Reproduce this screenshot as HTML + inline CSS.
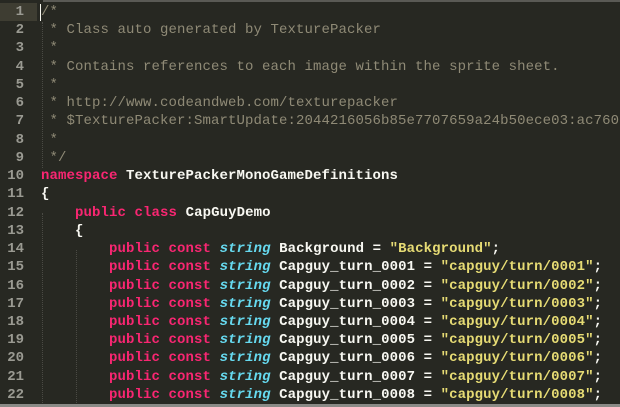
<!DOCTYPE html>
<html><head><style>
html,body{margin:0;padding:0;background:#272822;width:620px;height:407px;overflow:hidden}
body{position:relative;font-family:"Liberation Mono",monospace;font-size:14px}
.top{position:absolute;left:43px;top:0;width:577px;height:2px;background:#5a5a55}
.bot{position:absolute;left:0;top:404px;width:620px;height:3px;background:#8a8a86}
.g{position:absolute;left:0;top:3px;width:24px;text-align:right;color:#9a9a92;line-height:18.24px;white-space:pre;font-weight:bold}
.hl{position:absolute;left:0;top:3px;width:37px;height:18px;background:#3e3d32}
.c{position:absolute;left:41px;top:3px;line-height:18.24px;white-space:pre;color:#f8f8f2;font-weight:bold;letter-spacing:0.1px}
.cm{color:#8f8a76;font-weight:normal}.k{color:#f92672}.t{color:#66d9ef;font-style:italic}.s{color:#e6db74}
.cur{position:absolute;left:40px;top:4px;width:1px;height:17px;background:#f8f8f0}
.guide{position:absolute;width:0;border-left:1px dotted #4a4a44}
</style></head><body>
<div class="top"></div>
<div class="hl"></div>
<div class="g">1
2
3
4
5
6
7
8
9
10
11
12
13
14
15
16
17
18
19
20
21
22</div>
<div class="guide" style="left:42px;top:22px;height:146px"></div>
<div class="guide" style="left:42px;top:213px;height:190px"></div>
<div class="guide" style="left:76px;top:250px;height:153px"></div>
<div class="cur"></div>
<div class="c"><span class="cm">/*
 * Class auto generated by TexturePacker
 *
 * Contains references to each image within the sprite sheet.
 *
 * http://www.codeandweb.com/texturepacker
 * $TexturePacker:SmartUpdate:2044216056b85e7707659a24b50ece03:ac760
 *
 */</span>
<span class="k">namespace</span> TexturePackerMonoGameDefinitions
{
    <span class="k">public</span> <span class="k">class</span> CapGuyDemo
    {
        <span class="k">public</span> <span class="k">const</span> <span class="t">string</span> Background = <span class="s">"Background"</span>;
        <span class="k">public</span> <span class="k">const</span> <span class="t">string</span> Capguy_turn_0001 = <span class="s">"capguy/turn/0001"</span>;
        <span class="k">public</span> <span class="k">const</span> <span class="t">string</span> Capguy_turn_0002 = <span class="s">"capguy/turn/0002"</span>;
        <span class="k">public</span> <span class="k">const</span> <span class="t">string</span> Capguy_turn_0003 = <span class="s">"capguy/turn/0003"</span>;
        <span class="k">public</span> <span class="k">const</span> <span class="t">string</span> Capguy_turn_0004 = <span class="s">"capguy/turn/0004"</span>;
        <span class="k">public</span> <span class="k">const</span> <span class="t">string</span> Capguy_turn_0005 = <span class="s">"capguy/turn/0005"</span>;
        <span class="k">public</span> <span class="k">const</span> <span class="t">string</span> Capguy_turn_0006 = <span class="s">"capguy/turn/0006"</span>;
        <span class="k">public</span> <span class="k">const</span> <span class="t">string</span> Capguy_turn_0007 = <span class="s">"capguy/turn/0007"</span>;
        <span class="k">public</span> <span class="k">const</span> <span class="t">string</span> Capguy_turn_0008 = <span class="s">"capguy/turn/0008"</span>;</div>
<div class="bot"></div>
</body></html>
